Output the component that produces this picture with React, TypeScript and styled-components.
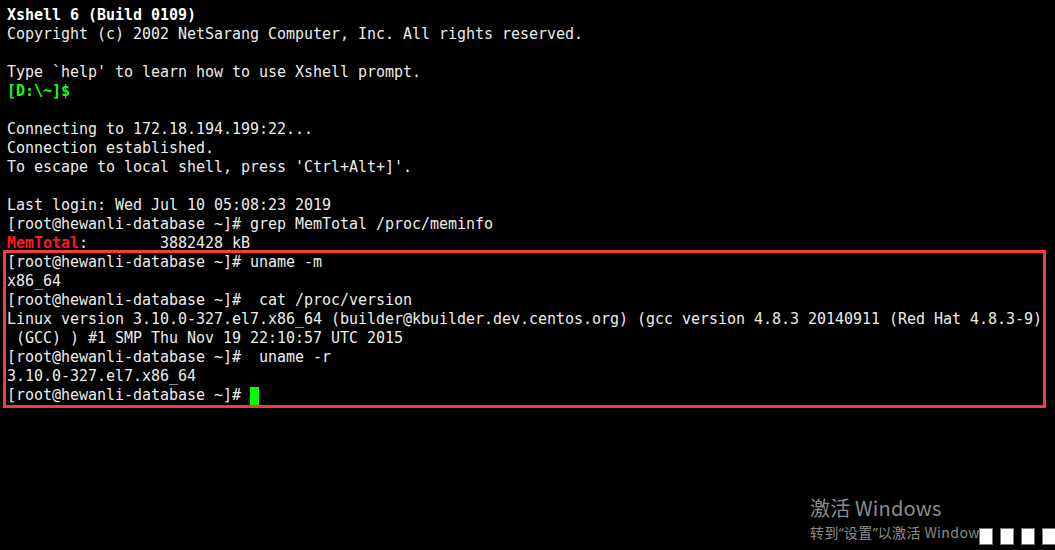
import React from "react";
import styled, { createGlobalStyle } from "styled-components";

const Global = createGlobalStyle`
  html, body { margin: 0; padding: 0; background: #000; }
  body { width: 1055px; height: 550px; overflow: hidden; }
`;

const Screen = styled.div`
  position: relative;
  width: 1055px;
  height: 550px;
  background: #000;
  overflow: hidden;
`;

const Terminal = styled.div`
  display: flex;
  flex-direction: column;
  padding: 6px 0 0 7px;
  font-family: "DejaVu Sans Mono", monospace;
  font-size: 15px;
  letter-spacing: -0.03px;
  color: #ececec;
`;

const Line = styled.div`
  height: 19px;
  line-height: 19px;
  white-space: pre;
  display: flex;
  align-items: center;
`;

const Span = styled.span<{ $tone?: "green" | "red" | "white"; $bold?: boolean }>`
  white-space: pre;
  color: ${(p) =>
    p.$tone === "green" ? "#12ff12" : p.$tone === "red" ? "#ff1a1a" : p.$tone === "white" ? "#ffffff" : "inherit"};
  font-weight: ${(p) => (p.$bold ? 700 : 400)};
`;

const Cursor = styled.span`
  display: inline-block;
  width: 9px;
  height: 18px;
  background: #00ff00;
`;

const Highlight = styled.div`
  position: absolute;
  left: 3px;
  top: 250px;
  width: 1037px;
  height: 152px;
  border: 3px solid #f53b3b;
  pointer-events: none;
`;

const Watermark = styled.div`
  position: absolute;
  left: 810px;
  top: 494px;
  display: flex;
  flex-direction: column;
  color: #8c8c8c;
  font-family: "Noto Sans CJK SC", "Noto Sans", sans-serif;
`;

const WmTitle = styled.div`
  font-size: 20px;
  line-height: 28px;
  letter-spacing: 0.2px;
`;

const WmSub = styled.div`
  font-size: 14px;
  line-height: 20px;
  letter-spacing: 0.4px;
`;

const Quote = styled.span`
  font-family: "Noto Sans", sans-serif;
  letter-spacing: 0;
`;

const Boxes = styled.div`
  position: absolute;
  left: 979px;
  top: 528px;
  display: flex;
  gap: 7px;
`;

const Box = styled.div`
  width: 12px;
  height: 15px;
  background: #fff;
  border: 1px solid #777;
`;

const prompt = "[root@hewanli-database ~]# ";

export default function App() {
  return (
    <Screen>
      <Global />
      <Terminal>
        <Line><Span $tone="white" $bold>Xshell 6 (Build 0109)</Span></Line>
        <Line>Copyright (c) 2002 NetSarang Computer, Inc. All rights reserved.</Line>
        <Line />
        <Line>Type `help' to learn how to use Xshell prompt.</Line>
        <Line><Span $tone="green" $bold>[D:\~]$</Span></Line>
        <Line />
        <Line>Connecting to 172.18.194.199:22...</Line>
        <Line>Connection established.</Line>
        <Line>To escape to local shell, press 'Ctrl+Alt+]'.</Line>
        <Line />
        <Line>Last login: Wed Jul 10 05:08:23 2019</Line>
        <Line>{prompt}grep MemTotal /proc/meminfo</Line>
        <Line><Span $tone="red" $bold>MemTotal</Span>:        3882428 kB</Line>
        <Line>{prompt}uname -m</Line>
        <Line>x86_64</Line>
        <Line>{prompt} cat /proc/version</Line>
        <Line>Linux version 3.10.0-327.el7.x86_64 (builder@kbuilder.dev.centos.org) (gcc version 4.8.3 20140911 (Red Hat 4.8.3-9)</Line>
        <Line> (GCC) ) #1 SMP Thu Nov 19 22:10:57 UTC 2015</Line>
        <Line>{prompt} uname -r</Line>
        <Line>3.10.0-327.el7.x86_64</Line>
        <Line>{prompt}<Cursor /></Line>
      </Terminal>
      <Highlight />
      <Watermark>
        <WmTitle>激活 Windows</WmTitle>
        <WmSub>转到<Quote>“</Quote>设置<Quote>”</Quote>以激活 Windows。</WmSub>
      </Watermark>
      <Boxes>
        <Box />
        <Box />
        <Box />
        <Box />
      </Boxes>
    </Screen>
  );
}
